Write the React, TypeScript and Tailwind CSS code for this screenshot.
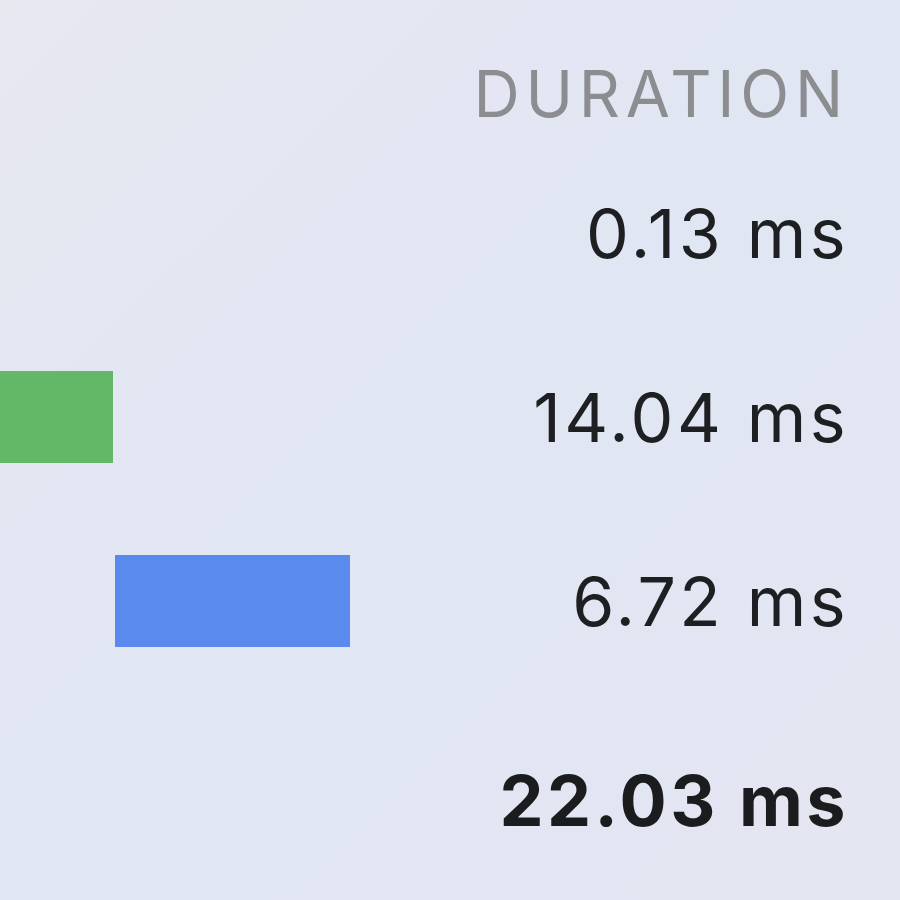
export default function App() {
  const rows = [
    { value: "0.13 ms", bar: null },
    { value: "14.04 ms", bar: { offset: "ml-0", width: "w-[113px]", color: "bg-[#62b866]" } },
    { value: "6.72 ms", bar: { offset: "ml-[115px]", width: "w-[235px]", color: "bg-[#5b8aee]" } },
  ];

  return (
    <div
      className="h-[900px] w-[900px] overflow-hidden bg-gradient-to-br from-[#e7e8f0] via-[#e1e6f4] to-[#e4e6f1] pr-[51px]"
      style={{ fontFamily: "Inter, 'Noto Sans', sans-serif" }}
    >
      <div className="flex h-[141px] items-center justify-end pt-[46px]">
        <span className="text-[64px] leading-none tracking-[0.09em] text-[#8b8d91]">DURATION</span>
      </div>

      {rows.map((row) => (
        <div key={row.value} className="flex h-[184px] items-center justify-between">
          <div className="flex h-[92px] flex-1 items-center">
            {row.bar && <div className={`${row.bar.offset} ${row.bar.width} ${row.bar.color} h-[92px]`} />}
          </div>
          <span className="text-[68px] leading-none tracking-[0.05em] text-[#1e1f22]">{row.value}</span>
        </div>
      ))}

      <div className="flex h-[216px] items-center justify-end">
        <span className="text-[70px] font-bold leading-none tracking-[0.05em] text-[#1b1c1e]">22.03 ms</span>
      </div>
    </div>
  );
}
